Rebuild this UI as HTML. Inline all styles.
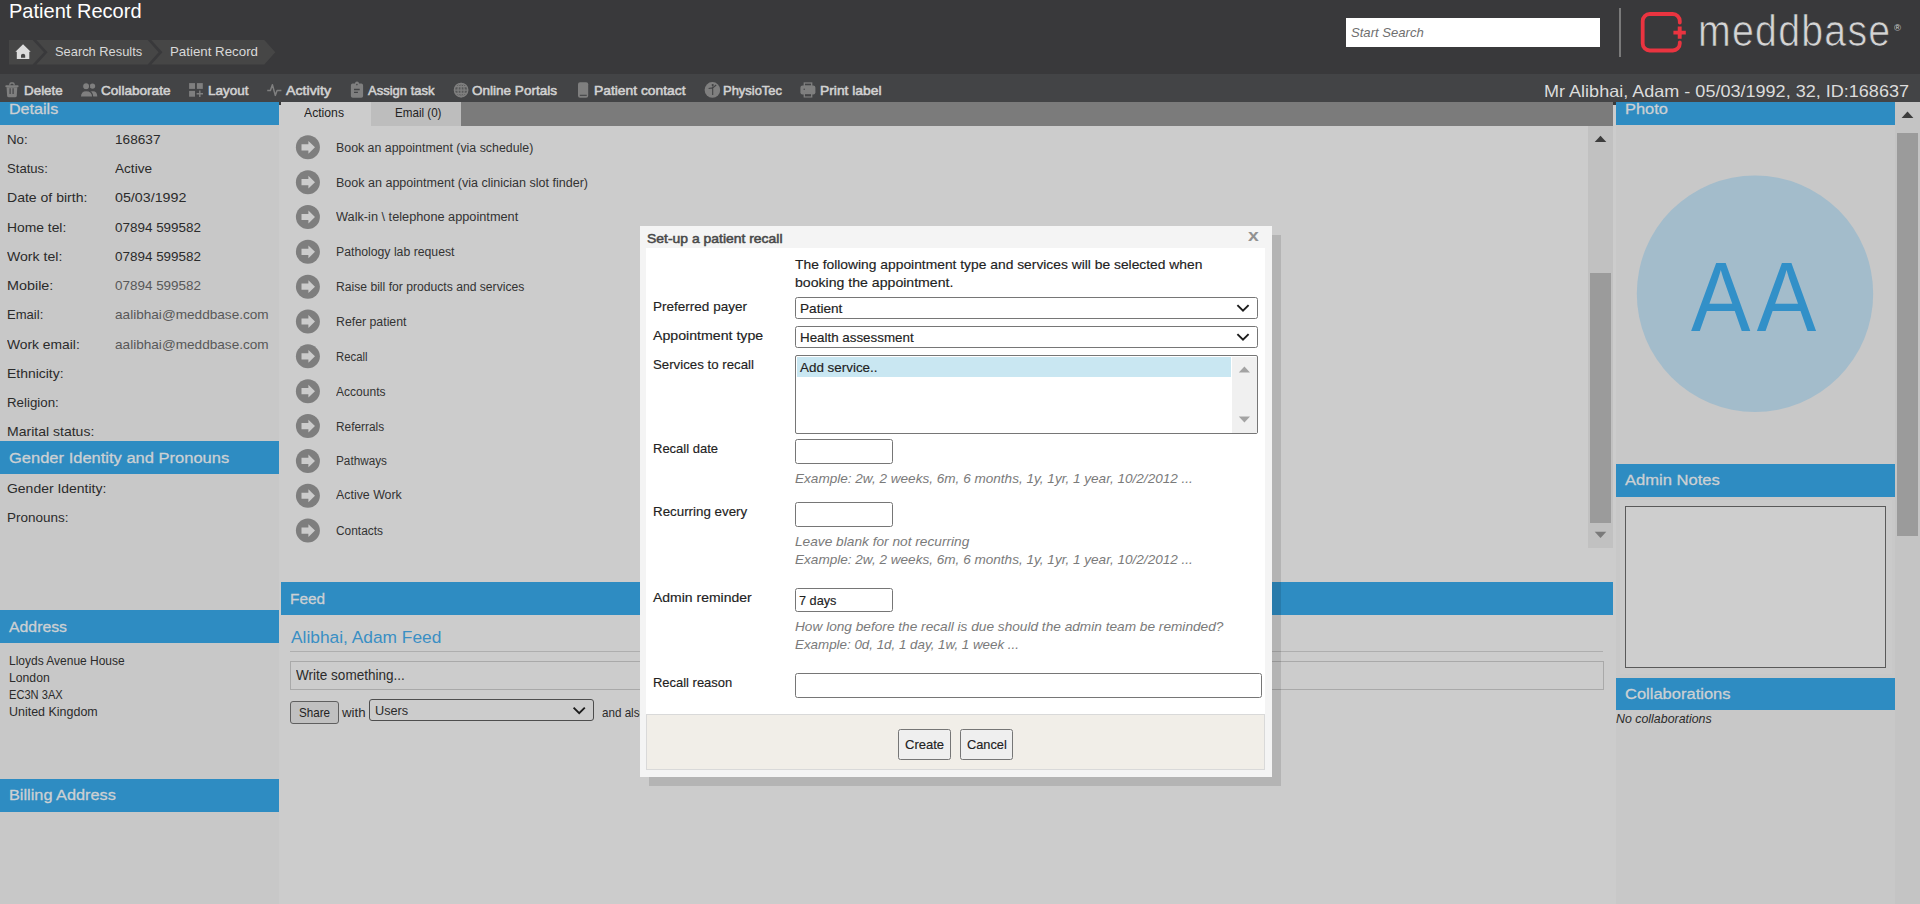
<!DOCTYPE html>
<html lang="en"><head><meta charset="utf-8"><title>Patient Record</title>
<style>
html,body{margin:0;padding:0;}
body{width:1920px;height:904px;overflow:hidden;position:relative;background:#cccccc;font-family:"Liberation Sans", sans-serif;}
.b{position:absolute;}
.t{position:absolute;white-space:pre;transform-origin:0 0;margin:0;padding:0;font-family:"Liberation Sans", sans-serif;}
svg{position:absolute;overflow:visible;}
</style></head>
<body>
<div class="b" style="left:0px;top:0px;width:1920px;height:74px;background:#39393b;"></div>
<div class="b" style="left:0px;top:74px;width:1920px;height:28px;background:#434446;"></div>
<div class="b" style="left:0px;top:102px;width:279px;height:802px;background:#c8c8c8;"></div>
<div class="b" style="left:279px;top:102px;width:1337px;height:802px;background:#cccccc;"></div>
<div class="b" style="left:1616px;top:102px;width:279px;height:802px;background:#c8c8c8;"></div>
<div class="b" style="left:1895px;top:102px;width:25px;height:802px;background:#c4c4c4;"></div>
<span class="t" style="left:9.3px;top:0.02px;font-size:21px;line-height:21px;color:#ffffff;transform:scaleX(0.9545);">Patient Record</span>
<svg style="left:0;top:0" width="300" height="74" viewBox="0 0 300 74">
<polygon points="9,40 32.6,40 44,52.3 32.6,64.6 9,64.6" fill="#464646"/>
<polygon points="36.4,40 147.7,40 158.6,52.3 147.7,64.6 36.4,64.6 47.6,52.3" fill="#464646"/>
<polygon points="151.3,40 264.3,40 275.3,52.3 264.3,64.6 151.3,64.6 162.4,52.3" fill="#464646"/>
<path d="M23.05 44.3 L30.7 51.7 L29.3 51.7 L29.3 59 L16.8 59 L16.8 51.7 L15.4 51.7 Z M21 57.7 L21 55.4 Q21 53.8 23.1 53.8 Q25.2 53.8 25.2 55.4 L25.2 57.7 Z" fill="#dcdcdc" fill-rule="evenodd"/>
</svg>
<span class="t" style="left:54.7px;top:44.63px;font-size:13.2px;line-height:13.2px;color:#d9d9d9;transform:scaleX(0.9752);">Search Results</span>
<span class="t" style="left:170px;top:44.63px;font-size:13.2px;line-height:13.2px;color:#d9d9d9;transform:scaleX(1.0088);">Patient Record</span>
<div class="b" style="left:1346px;top:18px;width:254px;height:29px;background:#ffffff;"></div>
<span class="t" style="left:1351.2px;top:27.23px;font-size:12.6px;line-height:12.6px;color:#6f6f6f;font-style:italic;transform:scaleX(1.0400);">Start Search</span>
<div class="b" style="left:1619px;top:8px;width:2px;height:49px;background:#7a7a7a;"></div>
<svg style="left:1630px;top:0" width="290" height="74" viewBox="1630 0 290 74">
<path d="M1679.8 22.5 V21 a7 7 0 0 0 -7 -7 H1649.7 a7 7 0 0 0 -7 7 V43.5 a7 7 0 0 0 7 7 H1672.8 a7 7 0 0 0 7 -7 V42.5" fill="none" stroke="#ea3440" stroke-width="3.8" stroke-linecap="round"/>
<path d="M1673.4 32.6 H1685.8 M1679.7 26.6 V38.7" fill="none" stroke="#ea3440" stroke-width="3.9"/>
</svg>
<span class="t" style="left:1697.6px;top:8.95px;font-size:44px;line-height:44px;color:#d4d4d4;-webkit-text-stroke:0.7px #39393b;letter-spacing:1.4px;transform:scaleX(0.8925);">meddbase</span>
<span class="t" style="left:1893.5px;top:23.88px;font-size:9px;line-height:9px;color:#d2d2d2;transform:scaleX(1.0541);">®</span>
<span class="t" style="left:23.75px;top:83.99px;font-size:13.6px;line-height:13.6px;color:#d2d2d2;-webkit-text-stroke:0.55px #d2d2d2;transform:scaleX(0.9861);">Delete</span>
<span class="t" style="left:100.5px;top:83.99px;font-size:13.6px;line-height:13.6px;color:#d2d2d2;-webkit-text-stroke:0.55px #d2d2d2;transform:scaleX(0.9996);">Collaborate</span>
<span class="t" style="left:207.5px;top:83.99px;font-size:13.6px;line-height:13.6px;color:#d2d2d2;-webkit-text-stroke:0.55px #d2d2d2;transform:scaleX(0.9920);">Layout</span>
<span class="t" style="left:285.5px;top:83.99px;font-size:13.6px;line-height:13.6px;color:#d2d2d2;-webkit-text-stroke:0.55px #d2d2d2;transform:scaleX(1.0450);">Activity</span>
<span class="t" style="left:368px;top:83.99px;font-size:13.6px;line-height:13.6px;color:#d2d2d2;-webkit-text-stroke:0.55px #d2d2d2;transform:scaleX(0.9566);">Assign task</span>
<span class="t" style="left:472px;top:83.99px;font-size:13.6px;line-height:13.6px;color:#d2d2d2;-webkit-text-stroke:0.55px #d2d2d2;transform:scaleX(0.9954);">Online Portals</span>
<span class="t" style="left:593.8px;top:83.99px;font-size:13.6px;line-height:13.6px;color:#d2d2d2;-webkit-text-stroke:0.55px #d2d2d2;transform:scaleX(1.0185);">Patient contact</span>
<span class="t" style="left:723px;top:83.99px;font-size:13.6px;line-height:13.6px;color:#d2d2d2;-webkit-text-stroke:0.55px #d2d2d2;transform:scaleX(0.9521);">PhysioTec</span>
<span class="t" style="left:819.5px;top:83.99px;font-size:13.6px;line-height:13.6px;color:#d2d2d2;-webkit-text-stroke:0.55px #d2d2d2;transform:scaleX(1.0173);">Print label</span>
<span class="t" style="left:1544px;top:83.33px;font-size:16.5px;line-height:16.5px;color:#dcdcdc;transform:scaleX(1.0932);">Mr Alibhai, Adam - 05/03/1992, 32, ID:168637</span>
<div class="b" style="left:0px;top:102px;width:279px;height:23px;background:#2e8cc2;"></div>
<span class="t" style="left:9.3px;top:101.18px;font-size:15.5px;line-height:15.5px;color:#ccd0d3;-webkit-text-stroke:0.3px #ccd0d3;transform:scaleX(1.0382);">Details</span>
<div class="b" style="left:0px;top:441px;width:279px;height:33px;background:#2e8cc2;"></div>
<span class="t" style="left:8.8px;top:449.98px;font-size:15.5px;line-height:15.5px;color:#ccd0d3;-webkit-text-stroke:0.3px #ccd0d3;transform:scaleX(1.0647);">Gender Identity and Pronouns</span>
<div class="b" style="left:0px;top:610px;width:279px;height:33px;background:#2e8cc2;"></div>
<span class="t" style="left:9px;top:618.98px;font-size:15.5px;line-height:15.5px;color:#ccd0d3;-webkit-text-stroke:0.3px #ccd0d3;transform:scaleX(1.0198);">Address</span>
<div class="b" style="left:0px;top:779px;width:279px;height:33px;background:#2e8cc2;"></div>
<span class="t" style="left:9px;top:787.38px;font-size:15.5px;line-height:15.5px;color:#ccd0d3;-webkit-text-stroke:0.3px #ccd0d3;transform:scaleX(1.0504);">Billing Address</span>
<div class="b" style="left:281px;top:582px;width:1332px;height:33px;background:#2e8cc2;"></div>
<span class="t" style="left:289.9px;top:591.08px;font-size:15.5px;line-height:15.5px;color:#ccd0d3;-webkit-text-stroke:0.3px #ccd0d3;transform:scaleX(0.9931);">Feed</span>
<div class="b" style="left:1616px;top:102px;width:279px;height:23px;background:#2e8cc2;"></div>
<span class="t" style="left:1624.5px;top:101.18px;font-size:15.5px;line-height:15.5px;color:#ccd0d3;-webkit-text-stroke:0.3px #ccd0d3;transform:scaleX(1.0613);">Photo</span>
<div class="b" style="left:1616px;top:464px;width:279px;height:33px;background:#2e8cc2;"></div>
<span class="t" style="left:1624.5px;top:472.38px;font-size:15.5px;line-height:15.5px;color:#ccd0d3;-webkit-text-stroke:0.3px #ccd0d3;transform:scaleX(1.0684);">Admin Notes</span>
<div class="b" style="left:1616px;top:678px;width:279px;height:32px;background:#2e8cc2;"></div>
<span class="t" style="left:1624.5px;top:686.38px;font-size:15.5px;line-height:15.5px;color:#ccd0d3;-webkit-text-stroke:0.3px #ccd0d3;transform:scaleX(1.0646);">Collaborations</span>
<span class="t" style="left:7.2px;top:132.96px;font-size:13.4px;line-height:13.4px;color:#2b2b2b;transform:scaleX(0.9931);">No:</span>
<span class="t" style="left:115px;top:132.96px;font-size:13.4px;line-height:13.4px;color:#2b2b2b;transform:scaleX(1.0182);">168637</span>
<span class="t" style="left:7.2px;top:161.86px;font-size:13.4px;line-height:13.4px;color:#2b2b2b;transform:scaleX(0.9787);">Status:</span>
<span class="t" style="left:115px;top:161.86px;font-size:13.4px;line-height:13.4px;color:#2b2b2b;transform:scaleX(1.0146);">Active</span>
<span class="t" style="left:7.2px;top:190.86px;font-size:13.4px;line-height:13.4px;color:#2b2b2b;transform:scaleX(1.0486);">Date of birth:</span>
<span class="t" style="left:115px;top:190.86px;font-size:13.4px;line-height:13.4px;color:#2b2b2b;transform:scaleX(1.0652);">05/03/1992</span>
<span class="t" style="left:7.2px;top:220.66px;font-size:13.4px;line-height:13.4px;color:#2b2b2b;transform:scaleX(1.0347);">Home tel:</span>
<span class="t" style="left:115px;top:220.66px;font-size:13.4px;line-height:13.4px;color:#2b2b2b;transform:scaleX(1.0042);">07894 599582</span>
<span class="t" style="left:7.2px;top:249.66px;font-size:13.4px;line-height:13.4px;color:#2b2b2b;transform:scaleX(1.0515);">Work tel:</span>
<span class="t" style="left:115px;top:249.66px;font-size:13.4px;line-height:13.4px;color:#2b2b2b;transform:scaleX(1.0042);">07894 599582</span>
<span class="t" style="left:7.2px;top:278.66px;font-size:13.4px;line-height:13.4px;color:#2b2b2b;transform:scaleX(1.0725);">Mobile:</span>
<span class="t" style="left:115px;top:278.66px;font-size:13.4px;line-height:13.4px;color:#585858;transform:scaleX(1.0042);">07894 599582</span>
<span class="t" style="left:7.2px;top:307.96px;font-size:13.4px;line-height:13.4px;color:#2b2b2b;transform:scaleX(0.9753);">Email:</span>
<span class="t" style="left:115px;top:307.96px;font-size:13.4px;line-height:13.4px;color:#585858;transform:scaleX(1.0158);">aalibhai@meddbase.com</span>
<span class="t" style="left:7.2px;top:338.16px;font-size:13.4px;line-height:13.4px;color:#2b2b2b;transform:scaleX(1.0333);">Work email:</span>
<span class="t" style="left:115px;top:338.16px;font-size:13.4px;line-height:13.4px;color:#585858;transform:scaleX(1.0158);">aalibhai@meddbase.com</span>
<span class="t" style="left:7.2px;top:367.36px;font-size:13.4px;line-height:13.4px;color:#2b2b2b;transform:scaleX(1.0400);">Ethnicity:</span>
<span class="t" style="left:7.2px;top:396.26px;font-size:13.4px;line-height:13.4px;color:#2b2b2b;transform:scaleX(0.9941);">Religion:</span>
<span class="t" style="left:7.2px;top:425.36px;font-size:13.4px;line-height:13.4px;color:#2b2b2b;transform:scaleX(1.0473);">Marital status:</span>
<span class="t" style="left:7.2px;top:481.96px;font-size:13.4px;line-height:13.4px;color:#2b2b2b;transform:scaleX(1.0422);">Gender Identity:</span>
<span class="t" style="left:7.2px;top:510.66px;font-size:13.4px;line-height:13.4px;color:#2b2b2b;transform:scaleX(1.0074);">Pronouns:</span>
<span class="t" style="left:9.3px;top:655.47px;font-size:12.2px;line-height:12.2px;color:#2b2b2b;transform:scaleX(0.9831);">Lloyds Avenue House</span>
<span class="t" style="left:9.3px;top:672.47px;font-size:12.2px;line-height:12.2px;color:#2b2b2b;transform:scaleX(1.0007);">London</span>
<span class="t" style="left:9.3px;top:689.47px;font-size:12.2px;line-height:12.2px;color:#2b2b2b;transform:scaleX(0.9111);">EC3N 3AX</span>
<span class="t" style="left:9.3px;top:706.47px;font-size:12.2px;line-height:12.2px;color:#2b2b2b;transform:scaleX(1.0228);">United Kingdom</span>
<div class="b" style="left:279px;top:102px;width:92px;height:24px;background:#cccccc;"></div>
<div class="b" style="left:371px;top:102px;width:90px;height:24px;background:#bdbdbd;"></div>
<div class="b" style="left:461px;top:102px;width:1152px;height:24px;background:#7b7b7b;"></div>
<div class="b" style="left:279px;top:102px;width:2px;height:3px;background:#3a3a3a;"></div>
<div class="b" style="left:1613px;top:102px;width:3px;height:3px;background:#3a3a3a;"></div>
<span class="t" style="left:304px;top:107.33px;font-size:12.6px;line-height:12.6px;color:#222;transform:scaleX(0.9682);">Actions</span>
<span class="t" style="left:394.5px;top:107.33px;font-size:12.6px;line-height:12.6px;color:#222;transform:scaleX(0.9228);">Email (0)</span>
<span class="t" style="left:335.5px;top:142.09px;font-size:12.3px;line-height:12.3px;color:#333333;transform:scaleX(1.0057);">Book an appointment (via schedule)</span>
<span class="t" style="left:335.5px;top:176.73px;font-size:12.3px;line-height:12.3px;color:#333333;transform:scaleX(1.0184);">Book an appointment (via clinician slot finder)</span>
<span class="t" style="left:335.5px;top:210.88px;font-size:12.3px;line-height:12.3px;color:#333333;transform:scaleX(1.0358);">Walk-in \ telephone appointment</span>
<span class="t" style="left:335.5px;top:245.72px;font-size:12.3px;line-height:12.3px;color:#333333;transform:scaleX(0.9962);">Pathology lab request</span>
<span class="t" style="left:335.5px;top:280.57px;font-size:12.3px;line-height:12.3px;color:#333333;transform:scaleX(0.9875);">Raise bill for products and services</span>
<span class="t" style="left:335.5px;top:316.21px;font-size:12.3px;line-height:12.3px;color:#333333;transform:scaleX(1.0011);">Refer patient</span>
<span class="t" style="left:335.5px;top:350.96px;font-size:12.3px;line-height:12.3px;color:#333333;transform:scaleX(0.9218);">Recall</span>
<span class="t" style="left:335.5px;top:386.00px;font-size:12.3px;line-height:12.3px;color:#333333;transform:scaleX(0.9784);">Accounts</span>
<span class="t" style="left:335.5px;top:420.85px;font-size:12.3px;line-height:12.3px;color:#333333;transform:scaleX(0.9641);">Referrals</span>
<span class="t" style="left:335.5px;top:455.29px;font-size:12.3px;line-height:12.3px;color:#333333;transform:scaleX(0.9563);">Pathways</span>
<span class="t" style="left:335.5px;top:489.24px;font-size:12.3px;line-height:12.3px;color:#333333;transform:scaleX(1.0065);">Active Work</span>
<span class="t" style="left:335.5px;top:525.38px;font-size:12.3px;line-height:12.3px;color:#333333;transform:scaleX(0.9684);">Contacts</span>
<svg style="left:0;top:0" width="340" height="560" viewBox="0 0 340 560">
<circle cx="307.9" cy="147.30" r="12" fill="#7e7e7e"/>
<path transform="translate(307.9 147.30)" d="M-6.4 -3.1 H0.5 V-6.4 L7.1 0 L0.5 6.4 V3.1 H-6.4 Z" fill="#cccccc"/>
<circle cx="307.9" cy="182.15" r="12" fill="#7e7e7e"/>
<path transform="translate(307.9 182.15)" d="M-6.4 -3.1 H0.5 V-6.4 L7.1 0 L0.5 6.4 V3.1 H-6.4 Z" fill="#cccccc"/>
<circle cx="307.9" cy="216.99" r="12" fill="#7e7e7e"/>
<path transform="translate(307.9 216.99)" d="M-6.4 -3.1 H0.5 V-6.4 L7.1 0 L0.5 6.4 V3.1 H-6.4 Z" fill="#cccccc"/>
<circle cx="307.9" cy="251.84" r="12" fill="#7e7e7e"/>
<path transform="translate(307.9 251.84)" d="M-6.4 -3.1 H0.5 V-6.4 L7.1 0 L0.5 6.4 V3.1 H-6.4 Z" fill="#cccccc"/>
<circle cx="307.9" cy="286.68" r="12" fill="#7e7e7e"/>
<path transform="translate(307.9 286.68)" d="M-6.4 -3.1 H0.5 V-6.4 L7.1 0 L0.5 6.4 V3.1 H-6.4 Z" fill="#cccccc"/>
<circle cx="307.9" cy="321.52" r="12" fill="#7e7e7e"/>
<path transform="translate(307.9 321.52)" d="M-6.4 -3.1 H0.5 V-6.4 L7.1 0 L0.5 6.4 V3.1 H-6.4 Z" fill="#cccccc"/>
<circle cx="307.9" cy="356.37" r="12" fill="#7e7e7e"/>
<path transform="translate(307.9 356.37)" d="M-6.4 -3.1 H0.5 V-6.4 L7.1 0 L0.5 6.4 V3.1 H-6.4 Z" fill="#cccccc"/>
<circle cx="307.9" cy="391.22" r="12" fill="#7e7e7e"/>
<path transform="translate(307.9 391.22)" d="M-6.4 -3.1 H0.5 V-6.4 L7.1 0 L0.5 6.4 V3.1 H-6.4 Z" fill="#cccccc"/>
<circle cx="307.9" cy="426.06" r="12" fill="#7e7e7e"/>
<path transform="translate(307.9 426.06)" d="M-6.4 -3.1 H0.5 V-6.4 L7.1 0 L0.5 6.4 V3.1 H-6.4 Z" fill="#cccccc"/>
<circle cx="307.9" cy="460.91" r="12" fill="#7e7e7e"/>
<path transform="translate(307.9 460.91)" d="M-6.4 -3.1 H0.5 V-6.4 L7.1 0 L0.5 6.4 V3.1 H-6.4 Z" fill="#cccccc"/>
<circle cx="307.9" cy="495.75" r="12" fill="#7e7e7e"/>
<path transform="translate(307.9 495.75)" d="M-6.4 -3.1 H0.5 V-6.4 L7.1 0 L0.5 6.4 V3.1 H-6.4 Z" fill="#cccccc"/>
<circle cx="307.9" cy="530.60" r="12" fill="#7e7e7e"/>
<path transform="translate(307.9 530.60)" d="M-6.4 -3.1 H0.5 V-6.4 L7.1 0 L0.5 6.4 V3.1 H-6.4 Z" fill="#cccccc"/>
</svg>
<div class="b" style="left:1588px;top:126px;width:25px;height:422px;background:#c1c1c1;"></div>
<div class="b" style="left:1590px;top:273px;width:21px;height:250px;background:#9b9b9b;"></div>
<svg style="left:1588px;top:126px" width="25" height="422" viewBox="1588 126 25 422">
<polygon points="1594.7,142 1606.3,142 1600.5,135.8" fill="#3d3d3d"/>
<polygon points="1594.7,531.8 1606.3,531.8 1600.5,538" fill="#7a7a7a"/>
</svg>
<span class="t" style="left:290.6px;top:629.44px;font-size:17.2px;line-height:17.2px;color:#3a8fc4;transform:scaleX(1.0090);">Alibhai, Adam Feed</span>
<div class="b" style="left:290px;top:651px;width:1313px;height:1px;background:#aeaeae;"></div>
<div class="b" style="left:290px;top:661px;width:1314px;height:29px;border:1px solid #a9a9a9;box-sizing:border-box;"></div>
<span class="t" style="left:296px;top:668.15px;font-size:14px;line-height:14px;color:#2b2b2b;transform:scaleX(0.9666);">Write something...</span>
<div class="b" style="left:290px;top:701px;width:49px;height:23px;background:#c0c0c0;border:1px solid #5f5f5f;box-sizing:border-box;border-radius:3px;"></div>
<span class="t" style="left:299px;top:706.63px;font-size:12.6px;line-height:12.6px;color:#222;transform:scaleX(0.9224);">Share</span>
<span class="t" style="left:341.9px;top:705.96px;font-size:13.4px;line-height:13.4px;color:#2b2b2b;transform:scaleX(0.9904);">with</span>
<div class="b" style="left:369px;top:699px;width:225px;height:22px;background:#cccccc;border:1px solid #4d4d4d;box-sizing:border-box;border-radius:3px;"></div>
<span class="t" style="left:374.8px;top:703.96px;font-size:13.4px;line-height:13.4px;color:#2b2b2b;transform:scaleX(0.9494);">Users</span>
<svg style="left:570px;top:703px" width="20" height="14" viewBox="570 703 20 14"><path d="M573.6 707.6 L579.2 713.2 L584.8 707.6" fill="none" stroke="#1c1c1c" stroke-width="1.9"/></svg>
<span class="t" style="left:602px;top:705.96px;font-size:13.4px;line-height:13.4px;color:#2b2b2b;transform:scaleX(0.8689);">and also</span>
<svg style="left:1616px;top:126px" width="279" height="320" viewBox="1616 126 279 320"><circle cx="1755" cy="293.7" r="118.2" fill="#a3bccb"/></svg>
<span class="t" style="left:1690.8px;top:247.00px;font-size:99px;line-height:99px;color:#3290c8;letter-spacing:7px;transform:scaleX(0.9002);">AA</span>
<div class="b" style="left:1620px;top:500px;width:272px;height:174px;background:#cacaca;"></div>
<div class="b" style="left:1625px;top:506px;width:261px;height:162px;background:#cecece;border:1px solid #5a5a5a;box-sizing:border-box;"></div>
<span class="t" style="left:1616px;top:713.33px;font-size:12.6px;line-height:12.6px;color:#2b2b2b;font-style:italic;transform:scaleX(0.9834);">No collaborations</span>
<div class="b" style="left:1897px;top:133px;width:21px;height:403px;background:#9b9b9b;"></div>
<svg style="left:1895px;top:102px" width="25" height="30" viewBox="1895 102 25 30"><polygon points="1901.6,118.1 1913.4,118.1 1907.5,111.5" fill="#3d3d3d"/></svg>
<svg style="left:0;top:74px" width="900" height="28" viewBox="0 74 900 28">
<g fill="#7f7f7f">
<!-- trash -->
<rect x="5.3" y="85.3" width="13.3" height="1.9" rx="0.9"/>
<path d="M6.6 87.2 H17.3 L16.8 95.7 Q16.7 97.3 15.1 97.3 H8.8 Q7.2 97.3 7.1 95.7 Z"/>
<!-- collaborate back person -->
<circle cx="92.5" cy="86.1" r="2.7"/><path d="M91 96.4 q1.2 -3 -0.6 -4.8 q6.8 -1.6 6.9 4.8 Z"/>
<!-- layout -->
<rect x="189.1" y="83.1" width="5.9" height="5.8"/><rect x="196.9" y="83.1" width="5.9" height="5.8"/>
<rect x="189.1" y="90.9" width="5.9" height="5.8"/>
<path d="M199.1 90.6 h1.4 v2.5 h2.5 v1.4 h-2.5 v2.5 h-1.4 v-2.5 h-2.5 v-1.4 h2.5 Z"/>
<!-- clipboard -->
<path d="M352.7 83.6 h2.3 a2 2 0 0 1 4 0 h2.3 a1.8 1.8 0 0 1 1.8 1.8 v10.5 a1.8 1.8 0 0 1 -1.8 1.8 h-8.6 a1.8 1.8 0 0 1 -1.8 -1.8 v-10.5 a1.8 1.8 0 0 1 1.8 -1.8 Z"/>
<!-- phone / tablet -->
<rect x="578" y="82.2" width="10.2" height="15.5" rx="2"/>
<!-- physio circle -->
<circle cx="712.4" cy="89.9" r="7.8"/>
<!-- printer body -->
<rect x="800.4" y="85.5" width="15" height="8.9" rx="2.2"/>
<!-- globe disc tint -->
<circle cx="461.1" cy="90.1" r="7.1" fill-opacity="0.35"/>
</g>
<!-- collaborate front person (outlined by toolbar colour) -->
<g fill="#7f7f7f" stroke="#434446" stroke-width="1.1">
<circle cx="86.1" cy="86.3" r="3.5"/>
<path d="M80.4 97 q0 -6.4 5.7 -6.4 q6.4 0 6.6 6.4 Z"/>
</g>
<g fill="none" stroke="#7f7f7f" stroke-width="1.5">
<!-- trash handle -->
<path d="M9.9 85.6 v-1.4 q0 -1.2 1.2 -1.2 h1.8 q1.2 0 1.2 1.2 v1.4" stroke-width="1.3"/>
<!-- activity -->
<path d="M267.2 90.4 h3.2 l2 -5.6 l2.9 10.6 l1.8 -5 h4.3" stroke-linejoin="round"/>
<!-- globe -->
<circle cx="461.1" cy="90.1" r="6.7" stroke-width="1.4"/>
<ellipse cx="461.1" cy="90.1" rx="3.1" ry="6.7" stroke-width="1.3"/>
<path d="M454.4 90.1 h13.4 M455.4 86.7 h11.4 M455.4 93.5 h11.4 M461.1 83.4 v13.4" stroke-width="1.3"/>
<!-- printer paper -->
<rect x="804.3" y="83" width="7.4" height="3.2" stroke-width="1.3"/>
<rect x="804.3" y="93.6" width="7.4" height="3.3" stroke-width="1.3"/>
</g>
<g fill="none" stroke="#434446" stroke-width="1.2">
<path d="M10.1 88.3 v5.8 M13.1 88.3 v5.8"/>
<path d="M354 89.5 h5.7 M354 92.3 h3.9" stroke-width="1.3"/>
<path d="M579.8 95.3 h7" stroke-width="1.1"/>
<path d="M712.7 86.4 v8.6 M708.6 88.5 l4 -0.6 l3.6 -2.9" stroke-width="1.1"/>
</g>
<circle cx="712.7" cy="85.1" r="1.1" fill="#434446"/>
<circle cx="356.9" cy="84.6" r="0.8" fill="#434446"/>
<circle cx="804.2" cy="89.3" r="0.7" fill="#434446"/>
<rect x="805" y="94.3" width="6" height="1.9" fill="#434446"/>
</svg>
<div class="b" style="left:640px;top:226px;width:632px;height:551px;background:#f4f4f4;box-shadow:9px 9px 0 0 rgba(0,0,0,0.118);"></div>
<div class="b" style="left:646px;top:248px;width:619px;height:467px;background:#ffffff;"></div>
<span class="t" style="left:646.5px;top:233.33px;font-size:12.6px;line-height:12.6px;color:#484848;-webkit-text-stroke:0.5px #484848;transform:scaleX(1.1060);">Set-up a patient recall</span>
<span class="t" style="left:1248.1px;top:227.26px;font-size:17.3px;line-height:17.3px;color:#929292;font-weight:700;transform:scaleX(1.1221);">x</span>
<span class="t" style="left:795px;top:257.86px;font-size:13.4px;line-height:13.4px;color:#222222;-webkit-text-stroke:0.15px #222222;transform:scaleX(1.0327);">The following appointment type and services will be selected when</span>
<span class="t" style="left:795px;top:275.86px;font-size:13.4px;line-height:13.4px;color:#222222;-webkit-text-stroke:0.15px #222222;transform:scaleX(1.0533);">booking the appointment.</span>
<span class="t" style="left:653.4px;top:299.66px;font-size:13.4px;line-height:13.4px;color:#222222;-webkit-text-stroke:0.15px #222222;transform:scaleX(1.0102);">Preferred payer</span>
<div class="b" style="left:795px;top:297px;width:463px;height:22px;background:#ffffff;border:1px solid #767676;box-sizing:border-box;border-radius:2.5px;"></div>
<span class="t" style="left:800px;top:301.66px;font-size:13.4px;line-height:13.4px;color:#222222;-webkit-text-stroke:0.15px #222222;transform:scaleX(1.0167);">Patient</span>
<svg style="left:1233.2px;top:301.4px" width="20" height="14" viewBox="-10 -7 20 14"><path d="M-5.6 -2.9 L0 2.7 L5.6 -2.9" fill="none" stroke="#1c1c1c" stroke-width="1.9"/></svg>
<span class="t" style="left:653.4px;top:328.66px;font-size:13.4px;line-height:13.4px;color:#222222;-webkit-text-stroke:0.15px #222222;transform:scaleX(1.0574);">Appointment type</span>
<div class="b" style="left:795px;top:326px;width:463px;height:22px;background:#ffffff;border:1px solid #767676;box-sizing:border-box;border-radius:2.5px;"></div>
<span class="t" style="left:800px;top:330.66px;font-size:13.4px;line-height:13.4px;color:#222222;-webkit-text-stroke:0.15px #222222;transform:scaleX(0.9976);">Health assessment</span>
<svg style="left:1233.2px;top:330.4px" width="20" height="14" viewBox="-10 -7 20 14"><path d="M-5.6 -2.9 L0 2.7 L5.6 -2.9" fill="none" stroke="#1c1c1c" stroke-width="1.9"/></svg>
<span class="t" style="left:653.4px;top:357.66px;font-size:13.4px;line-height:13.4px;color:#222222;-webkit-text-stroke:0.15px #222222;transform:scaleX(0.9895);">Services to recall</span>
<div class="b" style="left:795px;top:355px;width:463px;height:79px;background:#ffffff;border:1px solid #767676;box-sizing:border-box;border-radius:2px;"></div>
<div class="b" style="left:797px;top:357px;width:434px;height:20px;background:#c9e7f2;"></div>
<div class="b" style="left:1232px;top:357px;width:25px;height:76px;background:#f0f0f0;"></div>
<span class="t" style="left:800px;top:360.66px;font-size:13.4px;line-height:13.4px;color:#222222;-webkit-text-stroke:0.15px #222222;transform:scaleX(1.0012);">Add service..</span>
<svg style="left:1232px;top:357px" width="25" height="76" viewBox="1232 357 25 76">
<polygon points="1238.8,372.6 1250,372.6 1244.4,366.6" fill="#a3a3a3"/>
<polygon points="1238.8,416.6 1250,416.6 1244.4,422.6" fill="#a3a3a3"/>
</svg>
<span class="t" style="left:653.4px;top:441.66px;font-size:13.4px;line-height:13.4px;color:#222222;-webkit-text-stroke:0.15px #222222;transform:scaleX(0.9701);">Recall date</span>
<div class="b" style="left:795px;top:439px;width:98px;height:25px;background:#ffffff;border:1px solid #767676;box-sizing:border-box;border-radius:2.5px;"></div>
<span class="t" style="left:795px;top:471.66px;font-size:13.4px;line-height:13.4px;color:#7a7a7a;font-style:italic;transform:scaleX(1.0131);">Example: 2w, 2 weeks, 6m, 6 months, 1y, 1yr, 1 year, 10/2/2012 ...</span>
<span class="t" style="left:653.4px;top:504.66px;font-size:13.4px;line-height:13.4px;color:#222222;-webkit-text-stroke:0.15px #222222;transform:scaleX(0.9967);">Recurring every</span>
<div class="b" style="left:795px;top:502px;width:98px;height:25px;background:#ffffff;border:1px solid #767676;box-sizing:border-box;border-radius:2.5px;"></div>
<span class="t" style="left:795px;top:534.66px;font-size:13.4px;line-height:13.4px;color:#7a7a7a;font-style:italic;transform:scaleX(1.0225);">Leave blank for not recurring</span>
<span class="t" style="left:795px;top:552.66px;font-size:13.4px;line-height:13.4px;color:#7a7a7a;font-style:italic;transform:scaleX(1.0131);">Example: 2w, 2 weeks, 6m, 6 months, 1y, 1yr, 1 year, 10/2/2012 ...</span>
<span class="t" style="left:653.4px;top:590.96px;font-size:13.4px;line-height:13.4px;color:#222222;-webkit-text-stroke:0.15px #222222;transform:scaleX(1.0432);">Admin reminder</span>
<div class="b" style="left:795px;top:588px;width:98px;height:24px;background:#ffffff;border:1px solid #767676;box-sizing:border-box;border-radius:2.5px;"></div>
<span class="t" style="left:799.4px;top:594.16px;font-size:13.4px;line-height:13.4px;color:#222222;-webkit-text-stroke:0.15px #222222;transform:scaleX(0.9480);">7 days</span>
<span class="t" style="left:795px;top:619.66px;font-size:13.4px;line-height:13.4px;color:#7a7a7a;font-style:italic;transform:scaleX(1.0204);">How long before the recall is due should the admin team be reminded?</span>
<span class="t" style="left:795px;top:637.66px;font-size:13.4px;line-height:13.4px;color:#7a7a7a;font-style:italic;transform:scaleX(0.9976);">Example: 0d, 1d, 1 day, 1w, 1 week ...</span>
<span class="t" style="left:653.4px;top:675.86px;font-size:13.4px;line-height:13.4px;color:#222222;-webkit-text-stroke:0.15px #222222;transform:scaleX(0.9673);">Recall reason</span>
<div class="b" style="left:795px;top:673px;width:467px;height:25px;background:#ffffff;border:1px solid #767676;box-sizing:border-box;border-radius:2.5px;"></div>
<div class="b" style="left:646px;top:714px;width:619px;height:56px;background:#f1eee8;border:1px solid #d9d9d9;box-sizing:border-box;"></div>
<div class="b" style="left:898px;top:729px;width:53px;height:31px;background:#efefef;border:1px solid #767676;box-sizing:border-box;border-radius:2.5px;"></div>
<span class="t" style="left:904.9px;top:737.96px;font-size:13.4px;line-height:13.4px;color:#222222;-webkit-text-stroke:0.15px #222222;transform:scaleX(0.9726);">Create</span>
<div class="b" style="left:960px;top:729px;width:53px;height:31px;background:#efefef;border:1px solid #767676;box-sizing:border-box;border-radius:2.5px;"></div>
<span class="t" style="left:966.7px;top:737.96px;font-size:13.4px;line-height:13.4px;color:#222222;-webkit-text-stroke:0.15px #222222;transform:scaleX(0.9547);">Cancel</span>
</body></html>
